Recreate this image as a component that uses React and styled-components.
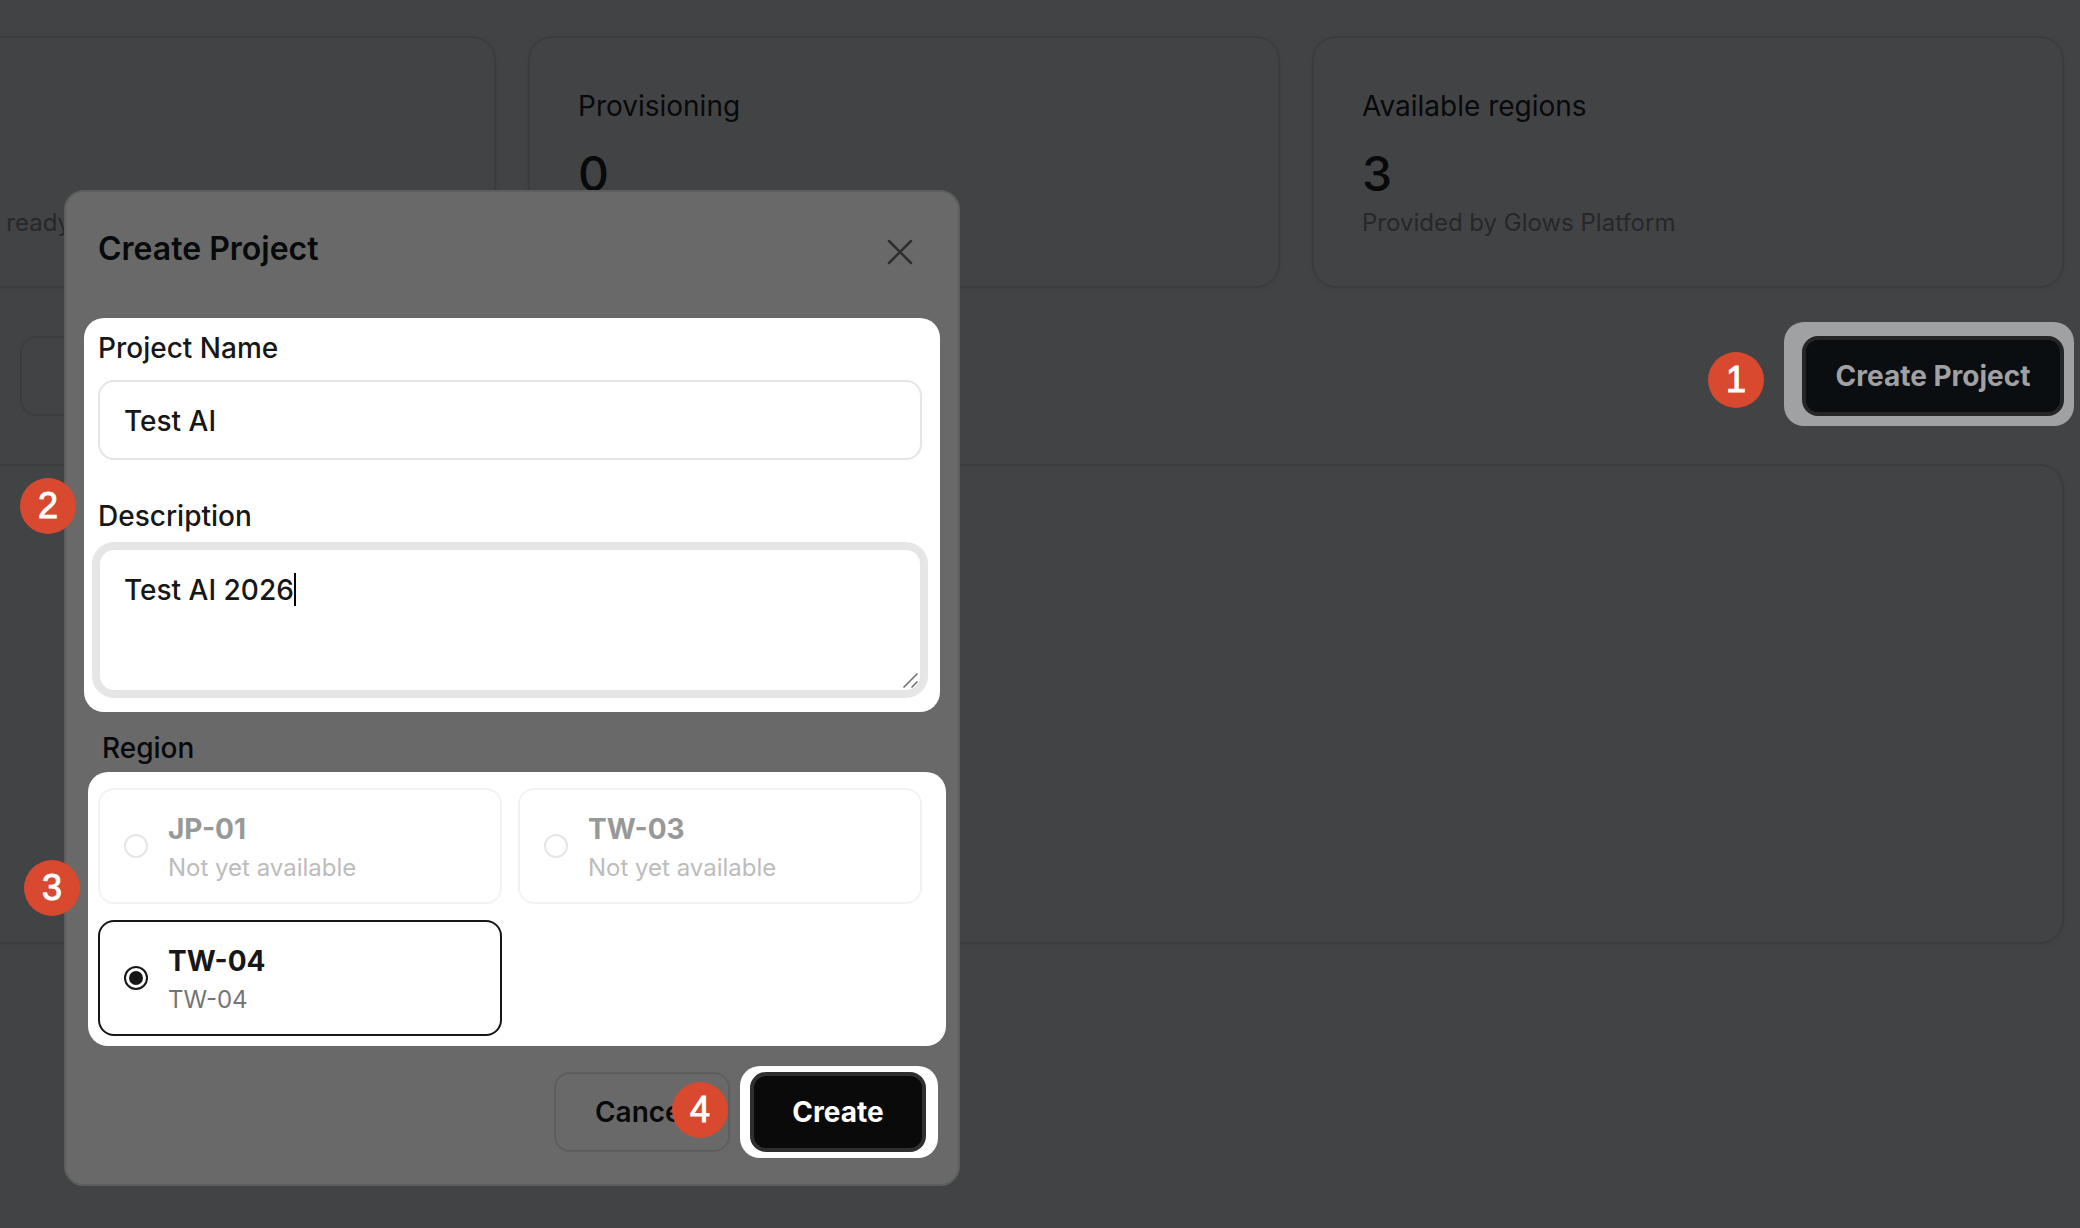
import React, { useState } from "react";
import styled, { createGlobalStyle, css } from "styled-components";

const REGIONS = [
  { id: "jp-01", name: "JP-01", note: "Not yet available", disabled: true },
  { id: "tw-03", name: "TW-03", note: "Not yet available", disabled: true },
  { id: "tw-04", name: "TW-04", note: "TW-04", disabled: false },
];

function StatCard({ title, value, note }) {
  return (
    <Card>
      <CardTitle>{title}</CardTitle>
      <CardValue>{value}</CardValue>
      <CardNote>{note}</CardNote>
    </Card>
  );
}

function RegionOption({ region, checked, onChange }) {
  return (
    <Option $checked={checked} htmlFor={region.id}>
      <Radio
        type="radio"
        name="region"
        id={region.id}
        checked={checked}
        disabled={region.disabled}
        onChange={() => onChange(region.id)}
      />
      <OptionText>
        <OptionName $disabled={region.disabled}>{region.name}</OptionName>
        <OptionNote $disabled={region.disabled}>{region.note}</OptionNote>
      </OptionText>
    </Option>
  );
}

function CreateProjectDialog() {
  const [name, setName] = useState("Test AI");
  const [description, setDescription] = useState("Test AI 2026");
  const [region, setRegion] = useState("tw-04");

  return (
    <Dialog role="dialog" aria-labelledby="dialog-title">
      <DialogHeader>
        <DialogTitle id="dialog-title">Create Project</DialogTitle>
        <CloseButton type="button" aria-label="Close">
          <svg width="28" height="28" viewBox="0 0 28 28" fill="none">
            <path d="M3 3L25 25M25 3L3 25" stroke="currentColor" strokeWidth="2.5" strokeLinecap="round" />
          </svg>
        </CloseButton>
      </DialogHeader>

      <Fields $inset="-10px -18px -20px -14px">
        <Field>
          <Label htmlFor="name">Project Name</Label>
          <Input id="name" type="text" value={name} onChange={(e) => setName(e.target.value)} />
        </Field>
        <Field>
          <Label htmlFor="description">Description</Label>
          <TextAreaBox>
            <TextArea
              id="description"
              value={description}
              onChange={(e) => setDescription(e.target.value)}
            />
            <Caret />
            <Grip width="16" height="16" viewBox="0 0 16 16">
              <path d="M1.5 15.5L15.5 1.5M9.5 15.5L15.5 9.5" stroke="#6b6b6b" strokeWidth="1.5" />
            </Grip>
          </TextAreaBox>
        </Field>
        <Step $left={-78} $top={150}>2</Step>
      </Fields>

      <RegionLabel>Region</RegionLabel>
      <Regions $inset="-16px -24px -10px -10px">
        {REGIONS.map((item) => (
          <RegionOption
            key={item.id}
            region={item}
            checked={region === item.id}
            onChange={setRegion}
          />
        ))}
        <Step $left={-74} $top={72}>3</Step>
      </Regions>

      <DialogFooter>
        <CancelButton type="button">Cancel</CancelButton>
        <Spot $inset="-6px -12px -6px -10px">
          <CreateButton type="button">Create</CreateButton>
          <Step $left={-78} $top={10}>4</Step>
        </Spot>
      </DialogFooter>
    </Dialog>
  );
}

function App() {
  return (
    <Page>
      <GlobalStyle />
      <Content>
        <Stats>
          <StatCard note="Local workspaces ready" />
          <StatCard title="Provisioning" value="0" />
          <StatCard title="Available regions" value="3" note="Provided by Glows Platform" />
        </Stats>
        <Toolbar>
          <Filter type="button" aria-label="Filter" />
          <Spot $inset="-14px -10px -10px -18px" $dim>
            <OpenButton type="button">Create Project</OpenButton>
            <Step $left={-94} $top={16}>1</Step>
          </Spot>
        </Toolbar>
        <Panel />
      </Content>
      <CreateProjectDialog />
    </Page>
  );
}

const GlobalStyle = createGlobalStyle`
  * {
    box-sizing: border-box;
  }

  body {
    margin: 0;
    background: #424345;
  }

  button, input, textarea {
    font: inherit;
    color: inherit;
  }
`;

// rounded plate that lights up the part of the page behind it
const spotlight = css`
  position: relative;
  isolation: isolate;

  &::before {
    content: "";
    position: absolute;
    z-index: -1;
    inset: ${(p) => p.$inset};
    border-radius: 20px;
    background: ${(p) => (p.$dim ? "#a0a1a3" : "#ffffff")};
  }
`;

const Page = styled.div`
  position: relative;
  min-height: 100vh;
  overflow: hidden;
  font-family: Inter, "Liberation Sans", sans-serif;
  font-size: 28px;
  line-height: 40px;
  color: #08090a;
  background: #424345;
`;

// the first column runs out of view on the left
const Content = styled.main`
  display: flex;
  flex-direction: column;
  gap: 48px;
  margin-left: -256px;
  padding: 36px 16px 36px 0;
`;

const Stats = styled.section`
  display: grid;
  grid-template-columns: repeat(3, 1fr);
  gap: 32px;
`;

const Card = styled.div`
  min-height: 252px;
  padding: 48px 48px 44px;
  border: 2px solid #3b3c3e;
  border-radius: 24px;
  box-shadow: 0 2px 4px rgba(0, 0, 0, 0.05);
`;

const CardTitle = styled.h2`
  min-height: 40px;
  margin: 0 0 16px;
  font-size: 28px;
  font-weight: 400;
`;

const CardValue = styled.p`
  min-height: 64px;
  margin: 0;
  font-size: 48px;
  font-weight: 500;
  line-height: 64px;
`;

const CardNote = styled.p`
  margin: 0;
  font-size: 24px;
  line-height: 34px;
  color: #26272a;
`;

const Toolbar = styled.div`
  display: flex;
  justify-content: space-between;
  padding-left: 276px;
`;

const Filter = styled.button`
  width: 320px;
  height: 80px;
  border: 2px solid #3b3c3e;
  border-radius: 16px;
  background: transparent;
`;

const Spot = styled.div`
  ${spotlight}
`;

const Button = styled.button`
  min-width: 176px;
  height: 80px;
  padding: 0 28px;
  border: 4px solid;
  border-radius: 16px;
  font-weight: 700;
`;

const OpenButton = styled(Button)`
  min-width: 262px;
  border-color: #232527;
  color: #a0a1a3;
  background: #0a0e10;
`;

const Panel = styled.section`
  min-height: 480px;
  border: 2px solid #3b3c3e;
  border-radius: 24px;
  box-shadow: 0 2px 4px rgba(0, 0, 0, 0.05);
`;

const Dialog = styled.form`
  position: absolute;
  top: 190px;
  left: 64px;
  width: 896px;
  padding: 32px;
  border: 2px solid #5d5e5e;
  border-radius: 20px;
  background: #696969;
`;

const DialogHeader = styled.header`
  display: flex;
  align-items: flex-start;
  justify-content: space-between;
  margin-bottom: 48px;
`;

const DialogTitle = styled.h1`
  margin: 0;
  font-size: 32px;
  font-weight: 600;
  line-height: 50px;
`;

const CloseButton = styled.button`
  display: flex;
  align-items: center;
  justify-content: center;
  width: 52px;
  height: 56px;
  padding: 0;
  border: none;
  color: #2e2e2f;
  background: transparent;
`;

const Fields = styled.div`
  ${spotlight}
  display: flex;
  flex-direction: column;
  gap: 36px;
  margin-right: 4px;
  color: #171717;
`;

const Field = styled.div`
  display: flex;
  flex-direction: column;
  gap: 12px;
`;

const Label = styled.label`
  font-weight: 500;
`;

const Input = styled.input`
  height: 80px;
  padding: 2px 24px 0;
  border: 2px solid #e5e5e5;
  border-radius: 16px;
  font-weight: 500;
  background: #ffffff;
  outline: none;
`;

const TextAreaBox = styled.div`
  position: relative;
  display: flex;
`;

const TextArea = styled.textarea`
  flex: 1;
  height: 144px;
  padding: 20px 24px;
  border: 2px solid #e5e5e5;
  border-radius: 16px;
  box-shadow: 0 0 0 6px #e6e6e6;
  font-weight: 500;
  background: #ffffff;
  outline: none;
  resize: none;
`;

const Caret = styled.span`
  position: absolute;
  top: 25px;
  left: 196px;
  width: 2px;
  height: 33px;
  background: #000000;
`;

const Grip = styled.svg`
  position: absolute;
  right: 4px;
  bottom: 4px;
`;

const RegionLabel = styled.div`
  margin: 36px 0 20px;
  padding-left: 4px;
  font-weight: 500;
`;

const Regions = styled.div`
  ${spotlight}
  display: grid;
  grid-template-columns: 1fr 1fr;
  gap: 16px;
  margin-right: 4px;
`;

const Option = styled.label`
  display: flex;
  align-items: center;
  gap: 20px;
  padding: 18px 24px;
  border: 2px solid ${(p) => (p.$checked ? "#171717" : "#f2f2f2")};
  border-radius: 16px;
  background: #ffffff;
`;

const Radio = styled.input`
  appearance: none;
  display: grid;
  place-items: center;
  width: 24px;
  height: 24px;
  margin: 0;
  border: 2px solid #e6e6e6;
  border-radius: 50%;

  &:checked {
    border-color: #171717;
  }

  &:checked::before {
    content: "";
    width: 14px;
    height: 14px;
    border-radius: 50%;
    background: #171717;
  }
`;

const OptionText = styled.span`
  display: flex;
  flex-direction: column;
  gap: 2px;
`;

const OptionName = styled.span`
  font-weight: 700;
  line-height: 42px;
  color: ${(p) => (p.$disabled ? "#979898" : "#171717")};
`;

const OptionNote = styled.span`
  font-size: 24px;
  line-height: 32px;
  color: ${(p) => (p.$disabled ? "#bcbcbc" : "#757575")};
`;

const DialogFooter = styled.footer`
  display: flex;
  justify-content: flex-end;
  gap: 20px;
  margin-top: 36px;
`;

const CancelButton = styled(Button)`
  border: 2px solid #5d5e5e;
  font-weight: 600;
  background: transparent;
`;

const CreateButton = styled(Button)`
  border-color: #2f2f2f;
  color: #ffffff;
  background: #0a0a0a;
`;

const Step = styled.span`
  position: absolute;
  top: ${(p) => p.$top}px;
  left: ${(p) => p.$left}px;
  display: flex;
  align-items: center;
  justify-content: center;
  width: 56px;
  height: 56px;
  border-radius: 50%;
  font-family: "Liberation Sans", Arial, sans-serif;
  font-size: 36px;
  font-weight: 400;
  color: #ffffff;
  background: #d8492f;
  -webkit-text-stroke: 1px #ffffff;
`;

export default App;
